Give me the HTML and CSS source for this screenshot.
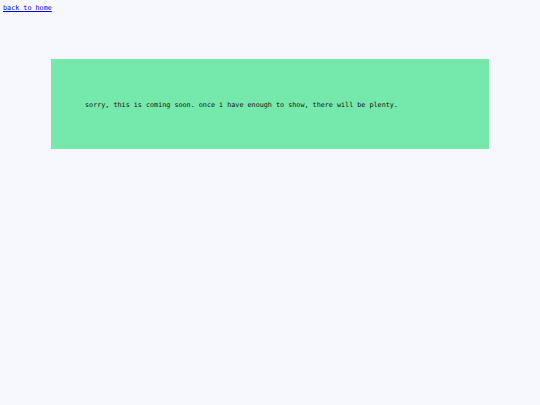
FILE: index.html
```html
<!DOCTYPE html>
<html>
<head>
<meta charset="utf-8">
<link rel="stylesheet" href="styles.css">
</head>
<body>
<nav class="top"><a class="home" href="#">back to home</a></nav>
<main class="wrap">
  <section class="notice">
    <p class="msg">sorry, this is coming soon. once i have enough to show, there will be plenty.</p>
  </section>
</main>
</body>
</html>
```
FILE: styles.css
```css
html, body {
  margin: 0;
  padding: 0;
  background: #f7f8fe;
}
body {
  font-family: "DejaVu Sans Mono", "Liberation Mono", monospace;
  font-size: 6.75px;
  line-height: 8px;
  color: #111;
  width: 540px;
  height: 405px;
}
.top {
  padding: 4px 0 0 3px;
  height: 9px;
}
.home {
  color: #0000ee;
  text-decoration: underline;
}
.wrap {
  display: flex;
  justify-content: center;
  padding-top: 46px;
}
.notice {
  width: 438px;
  height: 90px;
  background: #75e9ac;
  display: flex;
  align-items: center;
  padding: 2px 0 0 34px;
  box-sizing: border-box;
}
.msg {
  margin: 0;
}
```
